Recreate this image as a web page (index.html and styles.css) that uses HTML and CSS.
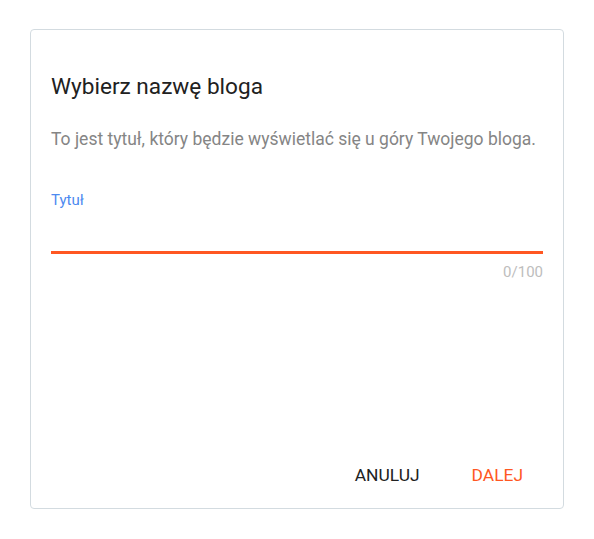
FILE: index.html
```html
<!DOCTYPE html>
<html lang="pl">
<head>
    <meta charset="UTF-8">
    <title>Wybierz nazwę bloga</title>
    <link rel="stylesheet" href="styles.css">
</head>
<body>
    <div class="dialog">
        <h1 class="dialog-title">Wybierz nazwę bloga</h1>
        <p class="dialog-text">To jest tytuł, który będzie wyświetlać się u góry Twojego bloga.</p>
        <label class="field">
            <span class="field-label">Tytuł</span>
            <input class="field-input" type="text" maxlength="100">
        </label>
        <div class="field-counter">0/100</div>
        <div class="dialog-actions">
            <button type="button" class="btn">Anuluj</button>
            <button type="button" class="btn btn-primary">Dalej</button>
        </div>
    </div>
</body>
</html>
```

FILE: styles.css
```css
body {
    margin: 29px 30px;
    font-family: Roboto, "Liberation Sans", sans-serif;
    background: #fff;
}

.dialog {
    box-sizing: border-box;
    height: 480px;
    border: 1px solid #d3dbe0;
    border-radius: 4px;
    padding: 20px 20px 13px;
    display: flex;
    flex-direction: column;
}

.dialog-title {
    margin: 23px 0 0;
    font-size: 22.6px;
    line-height: 28px;
    font-weight: 400;
    color: #212121;
}

.dialog-text {
    margin: 26px 0 0;
    font-size: 17.5px;
    line-height: 24px;
    color: #858585;
}

.field { display: block; margin-top: 39px; }

.field-label {
    display: block;
    font-size: 15px;
    line-height: 20px;
    color: #4d8af0;
}

.field-input {
    display: block;
    box-sizing: border-box;
    width: 100%;
    height: 40px;
    margin: 4px 0 0;
    padding: 0;
    border: 0;
    border-bottom: 3px solid #ff5722;
    outline: none;
    font: inherit;
    font-size: 16px;
    background: transparent;
}

.field-counter {
    margin-top: 8px;
    text-align: right;
    font-size: 15px;
    line-height: 20px;
    color: #bdbdbd;
}

.dialog-actions {
    margin-top: auto;
    display: flex;
    justify-content: flex-end;
    gap: 12px;
}

.btn {
    border: 0;
    background: none;
    padding: 10px 20px;
    font-family: inherit;
    font-size: 17.4px;
    font-weight: 400;
    text-transform: uppercase;
    color: #212121;
    cursor: pointer;
}

.btn-primary { color: #ff5722; }
```
